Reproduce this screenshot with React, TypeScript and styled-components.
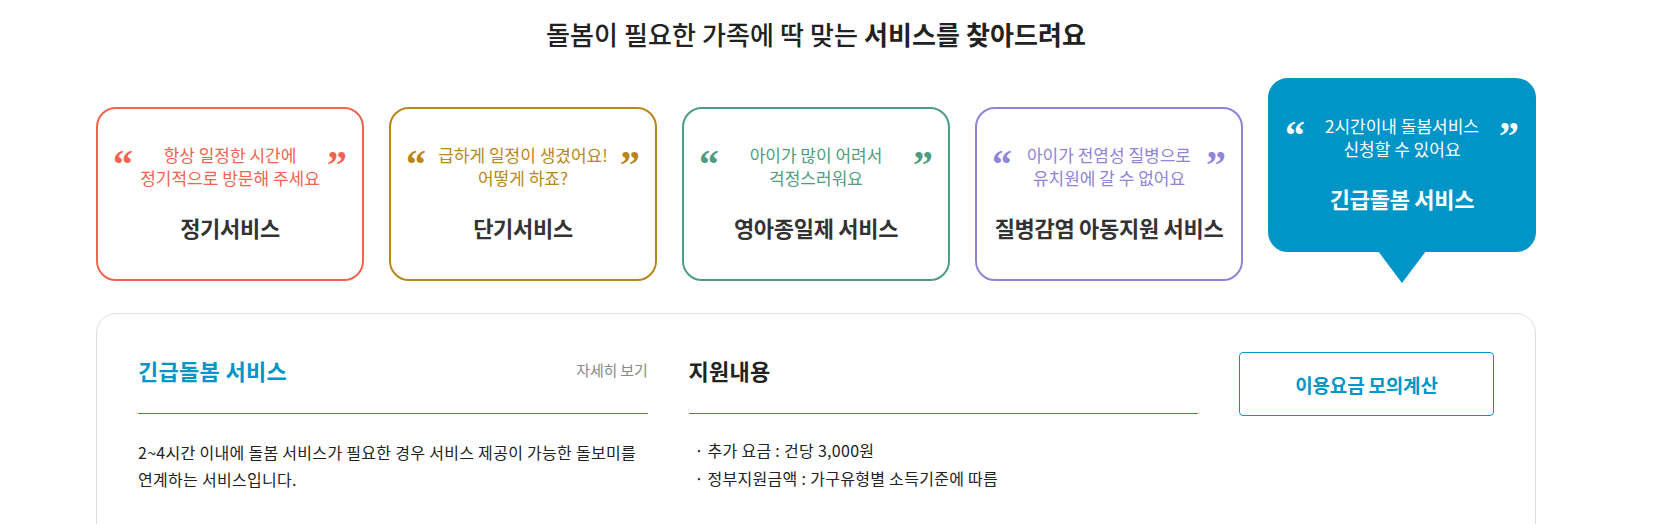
import React from "react";
import styled, { createGlobalStyle, css } from "styled-components";

const GlobalStyle = createGlobalStyle`
  html, body { margin: 0; padding: 0; background: #ffffff; }
  body {
    font-family: "Noto Sans CJK KR", "Noto Sans", sans-serif;
    color: #222222;
    overflow: hidden;
  }
  * { box-sizing: border-box; }
`;

const Page = styled.div`
  width: 1440px;
  margin-left: 96px;
  padding-top: 16px;
`;

const Heading = styled.h2`
  margin: 0;
  text-align: center;
  font-size: 26px;
  line-height: 36px;
  font-weight: 500;
  color: #222222;
  letter-spacing: 0.1px;
  strong { font-weight: 700; }
`;

const CardRow = styled.div`
  display: flex;
  gap: 25px;
  align-items: flex-start;
  margin-top: 55px;
`;

const Card = styled.div<{ $color: string; $active?: boolean }>`
  position: relative;
  width: 268px;
  height: 174px;
  border: 2px solid ${(p) => p.$color};
  border-radius: 20px;
  display: flex;
  flex-direction: column;
  align-items: stretch;
  justify-content: center;
  gap: 23px;
  padding-bottom: 3px;
  background: #ffffff;
  color: ${(p) => p.$color};
  ${(p) =>
    p.$active &&
    css`
      background: ${p.$color};
      color: #ffffff;
      transform: translateY(-29px);
      &::after {
        content: "";
        position: absolute;
        left: 50%;
        bottom: -33px;
        margin-left: -24px;
        border-left: 24px solid transparent;
        border-right: 24px solid transparent;
        border-top: 32px solid ${p.$color};
      }
    `}
`;

const QuoteRow = styled.div`
  display: flex;
  align-items: flex-start;
  padding: 0 15px;
`;

const QuoteMark = styled.span`
  flex: 0 0 18px;
  font-family: "Liberation Serif", "Times New Roman", serif;
  font-weight: 700;
  font-size: 40px;
  line-height: 38px;
  margin-top: 3px;
  color: inherit;
  text-align: center;
`;

const Sub = styled.p`
  flex: 1;
  margin: 0;
  text-align: center;
  font-size: 17px;
  line-height: 23px;
  font-weight: 400;
  letter-spacing: 0;
`;

const CardTitle = styled.h3<{ $active?: boolean }>`
  margin: 0;
  text-align: center;
  font-size: 22px;
  line-height: 30px;
  font-weight: 700;
  letter-spacing: -0.3px;
  color: ${(p) => (p.$active ? "#ffffff" : "#333333")};
`;

const Panel = styled.section`
  margin-top: 32px;
  border: 1px solid #dddddd;
  border-radius: 20px;
  padding: 38px 41px 60px;
  display: grid;
  grid-template-columns: 1fr 1fr 255px;
  column-gap: 41px;
  align-items: start;
`;

const Column = styled.div`
  display: flex;
  flex-direction: column;
`;

const ColHead = styled.div`
  display: flex;
  align-items: center;
  justify-content: space-between;
  height: 62px;
  padding-bottom: 25px;
  border-bottom: 1px solid #0096c8;
`;

const ColTitle = styled.h4<{ $accent?: boolean }>`
  margin: 0;
  font-size: 22px;
  line-height: 36px;
  font-weight: 700;
  letter-spacing: 0.3px;
  color: ${(p) => (p.$accent ? "#0096c8" : "#222222")};
`;

const MoreLink = styled.a`
  font-size: 15px;
  line-height: 36px;
  color: #888888;
  text-decoration: none;
  letter-spacing: -0.2px;
`;

const Desc = styled.p`
  margin: 25px 0 0;
  font-size: 16px;
  line-height: 27px;
  color: #222222;
  letter-spacing: 0.3px;
`;

const BulletList = styled.ul`
  list-style: none;
  margin: 22px 0 0;
  padding: 0 0 0 6px;
`;

const Bullet = styled.li`
  display: flex;
  font-size: 16px;
  line-height: 28px;
  color: #222222;
  letter-spacing: 0.3px;
  &::before {
    content: "·";
    width: 13px;
    flex: 0 0 13px;
  }
`;

const CalcButton = styled.button`
  height: 64px;
  width: 100%;
  border: 1px solid #0096c8;
  border-radius: 4px;
  background: #ffffff;
  color: #0096c8;
  font-family: inherit;
  font-size: 19px;
  font-weight: 700;
  letter-spacing: -0.2px;
  cursor: pointer;
`;

type Service = {
  color: string;
  lines: [string, string];
  title: string;
  active?: boolean;
};

const services: Service[] = [
  { color: "#f3644f", lines: ["항상 일정한 시간에", "정기적으로 방문해 주세요"], title: "정기서비스" },
  { color: "#b8861b", lines: ["급하게 일정이 생겼어요!", "어떻게 하죠?"], title: "단기서비스" },
  { color: "#4f9c7e", lines: ["아이가 많이 어려서", "걱정스러워요"], title: "영아종일제 서비스" },
  { color: "#9183d8", lines: ["아이가 전염성 질병으로", "유치원에 갈 수 없어요"], title: "질병감염 아동지원 서비스" },
  { color: "#0095c7", lines: ["2시간이내 돌봄서비스", "신청할 수 있어요"], title: "긴급돌봄 서비스", active: true },
];

export default function App() {
  return (
    <>
      <GlobalStyle />
      <Page>
        <Heading>
          돌봄이 필요한 가족에 딱 맞는 <strong>서비스를 찾아드려요</strong>
        </Heading>
        <CardRow>
          {services.map((s) => (
            <Card key={s.title} $color={s.color} $active={s.active}>
              <QuoteRow>
                <QuoteMark>“</QuoteMark>
                <Sub>
                  {s.lines[0]}
                  <br />
                  {s.lines[1]}
                </Sub>
                <QuoteMark>”</QuoteMark>
              </QuoteRow>
              <CardTitle $active={s.active}>{s.title}</CardTitle>
            </Card>
          ))}
        </CardRow>
        <Panel>
          <Column>
            <ColHead>
              <ColTitle $accent>긴급돌봄 서비스</ColTitle>
              <MoreLink href="#">자세히 보기</MoreLink>
            </ColHead>
            <Desc>
              2~4시간 이내에 돌봄 서비스가 필요한 경우 서비스 제공이 가능한 돌보미를
              <br />
              연계하는 서비스입니다.
            </Desc>
          </Column>
          <Column>
            <ColHead>
              <ColTitle>지원내용</ColTitle>
            </ColHead>
            <BulletList>
              <Bullet>추가 요금 : 건당 3,000원</Bullet>
              <Bullet>정부지원금액 : 가구유형별 소득기준에 따름</Bullet>
            </BulletList>
          </Column>
          <Column>
            <CalcButton type="button">이용요금 모의계산</CalcButton>
          </Column>
        </Panel>
      </Page>
    </>
  );
}
